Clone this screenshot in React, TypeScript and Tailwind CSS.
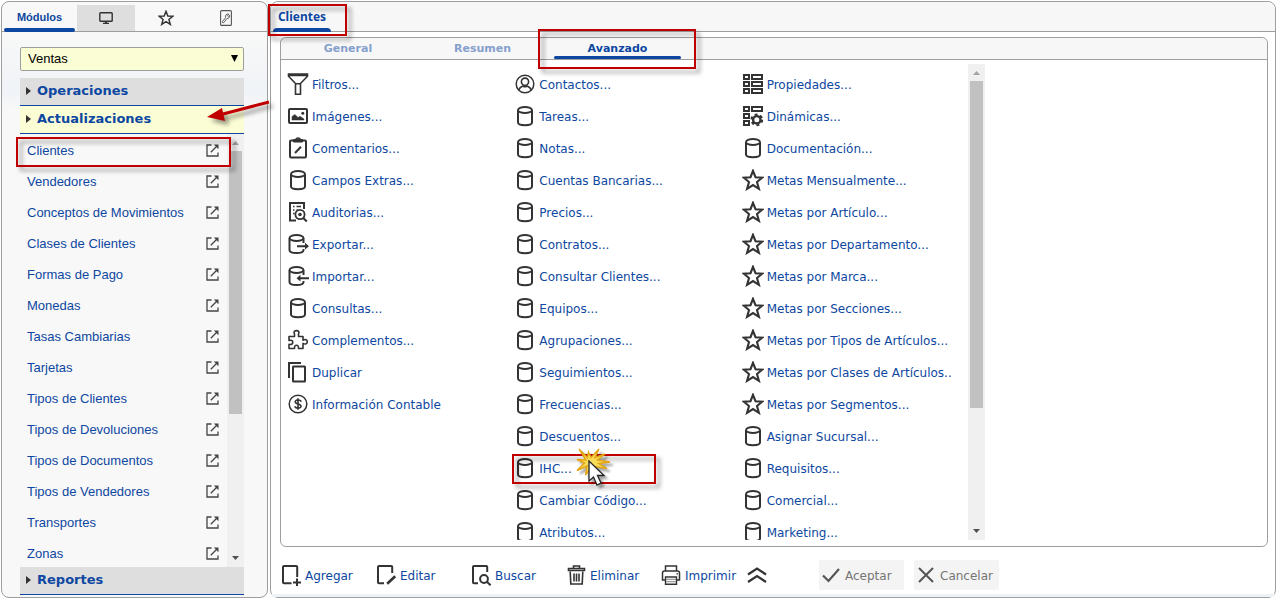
import type { ReactNode } from "react";

type IconName =
  | "funnel"
  | "image"
  | "clipboard"
  | "database"
  | "audit"
  | "export"
  | "import"
  | "puzzle"
  | "copy"
  | "dollar"
  | "contact"
  | "properties"
  | "dynamic"
  | "star";

const modules = [
  "Clientes",
  "Vendedores",
  "Conceptos de Movimientos",
  "Clases de Clientes",
  "Formas de Pago",
  "Monedas",
  "Tasas Cambiarias",
  "Tarjetas",
  "Tipos de Clientes",
  "Tipos de Devoluciones",
  "Tipos de Documentos",
  "Tipos de Vendedores",
  "Transportes",
  "Zonas",
];

const columns: { label: string; icon: IconName }[][] = [
  [
    { label: "Filtros...", icon: "funnel" },
    { label: "Imágenes...", icon: "image" },
    { label: "Comentarios...", icon: "clipboard" },
    { label: "Campos Extras...", icon: "database" },
    { label: "Auditorias...", icon: "audit" },
    { label: "Exportar...", icon: "export" },
    { label: "Importar...", icon: "import" },
    { label: "Consultas...", icon: "database" },
    { label: "Complementos...", icon: "puzzle" },
    { label: "Duplicar", icon: "copy" },
    { label: "Información Contable", icon: "dollar" },
  ],
  [
    { label: "Contactos...", icon: "contact" },
    { label: "Tareas...", icon: "database" },
    { label: "Notas...", icon: "database" },
    { label: "Cuentas Bancarias...", icon: "database" },
    { label: "Precios...", icon: "database" },
    { label: "Contratos...", icon: "database" },
    { label: "Consultar Clientes...", icon: "database" },
    { label: "Equipos...", icon: "database" },
    { label: "Agrupaciones...", icon: "database" },
    { label: "Seguimientos...", icon: "database" },
    { label: "Frecuencias...", icon: "database" },
    { label: "Descuentos...", icon: "database" },
    { label: "IHC...", icon: "database" },
    { label: "Cambiar Código...", icon: "database" },
    { label: "Atributos...", icon: "database" },
  ],
  [
    { label: "Propiedades...", icon: "properties" },
    { label: "Dinámicas...", icon: "dynamic" },
    { label: "Documentación...", icon: "database" },
    { label: "Metas Mensualmente...", icon: "star" },
    { label: "Metas por Artículo...", icon: "star" },
    { label: "Metas por Departamento...", icon: "star" },
    { label: "Metas por Marca...", icon: "star" },
    { label: "Metas por Secciones...", icon: "star" },
    { label: "Metas por Tipos de Artículos...", icon: "star" },
    { label: "Metas por Clases de Artículos...", icon: "star" },
    { label: "Metas por Segmentos...", icon: "star" },
    { label: "Asignar Sucursal...", icon: "database" },
    { label: "Requisitos...", icon: "database" },
    { label: "Comercial...", icon: "database" },
    { label: "Marketing...", icon: "database" },
  ],
];

const starPoints =
  "11,1.8 13.5,8.2 20.3,8.6 15,13 16.9,19.8 11,16 5.1,19.8 7,13 1.7,8.6 8.5,8.2";

const shapes: Record<IconName, ReactNode> = {
  funnel: (
    <path
      d="M1.5 1H20.5V3.2L13.5 10.5V21.2H8.5V10.5L1.5 3.2ZM1.5 2.4H20.5M8.5 10.8H13.5"
      strokeWidth="1.6"
    />
  ),
  image: (
    <>
      <rect x="2" y="4" width="18" height="14" rx="1" />
      <path
        d="M5 15V11.5L8 9.5L11 12.5L13 11.3L17 14V15Z"
        fill="#333"
        strokeWidth="0.5"
      />
      <circle cx="15.8" cy="8.2" r="1.5" fill="#333" stroke="none" />
    </>
  ),
  clipboard: (
    <>
      <rect x="3" y="3.5" width="16" height="17" rx="1" />
      <path d="M6.5 2.6H15.5V5H6.5Z" fill="#333" strokeWidth="1" />
      <path d="M9 2.4C9 0.6 13 0.6 13 2.4" strokeWidth="1.6" />
      <path d="M8 16L14 9.8" />
    </>
  ),
  database: (
    <>
      <ellipse cx="11" cy="5" rx="7" ry="3" strokeWidth="1.8" />
      <path d="M4 5V17.5C4 21 18 21 18 17.5V5" />
    </>
  ),
  audit: (
    <>
      <path d="M9 19.5H3V2H17V8" />
      <path d="M6 5.5H7.5M9.5 5.5H14M6 9H7.5M6 12.5H7.5M9.5 9H11" strokeWidth="1.5" />
      <circle cx="13" cy="13.5" r="4.6" strokeWidth="1.8" />
      <circle cx="13" cy="13.5" r="1.8" fill="#333" stroke="none" />
      <path d="M16.3 17L19.8 20.5" />
    </>
  ),
  export: (
    <>
      <ellipse cx="9.5" cy="5" rx="7" ry="3" strokeWidth="1.8" />
      <path d="M2.5 5V17C2.5 21 16.5 21 16.5 17V16M16.5 5V10M10 13.2H20" />
      <path d="M18 9.8L22 13.2L18 16.6Z" fill="#333" stroke="none" />
    </>
  ),
  import: (
    <>
      <ellipse cx="9.5" cy="5" rx="7" ry="3" strokeWidth="1.8" />
      <path d="M2.5 5V17C2.5 21 16.5 21 16.5 17V16M16.5 5V10M12 13.2H22" />
      <path d="M13.5 9.8L9.5 13.2L13.5 16.6Z" fill="#333" stroke="none" />
    </>
  ),
  puzzle: (
    <path
      d="M2 7.5H7.5V5C6.2 3 7.6 1.6 9.5 1.6S12.8 3 11.5 5V7.5H16V11.2C18.5 9.8 20.3 10.8 20.3 12.8S18.5 15.8 16 14.4V19.5H11.5C11.7 16.9 10.6 16.2 9.5 16.2S7.3 16.9 7.5 19.5H2V15.2C4.8 16 5.8 14.6 5.8 13.2S4.6 10.8 2 11.5Z"
      strokeWidth="1.6"
      strokeLinejoin="round"
    />
  ),
  copy: (
    <>
      <path d="M2 17V2H14" />
      <rect x="6" y="5.5" width="12" height="15" rx="0.5" />
    </>
  ),
  dollar: (
    <>
      <circle cx="11" cy="11" r="8.8" strokeWidth="1.5" />
      <path
        d="M14 8.8C14 6.4 8.2 6.2 8.2 8.8C8.2 11.4 14 10.6 14 13.2C14 15.8 8.1 15.6 8.1 13.2M11 5.2V16.8"
        strokeWidth="1.6"
      />
    </>
  ),
  contact: (
    <>
      <circle cx="11" cy="11" r="8.8" strokeWidth="1.5" />
      <circle cx="11" cy="8.7" r="3.6" strokeWidth="1.6" />
      <path
        d="M4.8 17C5.6 14.2 7.4 13.6 9 13C10.2 13.9 11.8 13.9 13 13C14.6 13.6 16.4 14.2 17.2 17"
        strokeWidth="1.6"
      />
    </>
  ),
  properties: (
    <path d="M2 2H7V6H2ZM10 2H20V6H10ZM2 9H7V13H2ZM10 9H20V13H10ZM2 16H7V20H2ZM10 16H20V20H10Z" />
  ),
  dynamic: (
    <>
      <path d="M2 2H7V6H2ZM10 2H20V6H10ZM2 9H7V13H2ZM2 16H7V20H2Z" />
      <circle cx="14.8" cy="14.8" r="3.7" strokeWidth="2.4" />
      <circle cx="14.8" cy="14.8" r="5.4" strokeWidth="2" strokeDasharray="2.9 2.755" />
    </>
  ),
  star: <polygon points={starPoints} strokeWidth="2.1" />,
};

function Drawing({ children }: { children: ReactNode }) {
  return (
    <svg
      className="size-[22px] shrink-0"
      viewBox="0 0 22 22"
      fill="none"
      stroke="#333"
      strokeWidth="2"
      aria-hidden="true"
    >
      {children}
    </svg>
  );
}

// Red frame that floats over the element it calls attention to
function Highlight({ className }: { className: string }) {
  return (
    <div
      className={`pointer-events-none absolute z-10 border-2 border-[#c00000] drop-shadow-[4px_4px_2px_rgba(0,0,0,0.4)] ${className}`}
    />
  );
}

function Scrollbar({ thumb }: { thumb: string }) {
  return (
    <div className="flex w-[17px] shrink-0 flex-col items-center bg-[#f0f0f0]">
      <svg className="size-[17px] shrink-0" viewBox="0 0 17 17" aria-hidden="true">
        <path d="M5 11L8.5 7L12 11Z" fill="#a3a3a3" />
      </svg>
      <div className="flex w-[13px] grow flex-col">
        <div className={`bg-[#c1c1c1] ${thumb}`} />
      </div>
      <svg className="size-[17px] shrink-0" viewBox="0 0 17 17" aria-hidden="true">
        <path d="M5 6L8.5 10L12 6Z" fill="#505050" />
      </svg>
    </div>
  );
}

function SectionHeader({ title, active }: { title: string; active?: boolean }) {
  return (
    <button
      type="button"
      className={`flex h-7 w-full shrink-0 items-center gap-1.5 border-b border-[#0d47a1] pb-0.5 pl-1.5 text-left font-['DejaVu_Sans',sans-serif] text-[13px] font-bold text-[#0d47a1] ${
        active ? "bg-[#fbfdd5]" : "bg-[#dedede]"
      }`}
    >
      <svg className="h-2 w-[5px]" viewBox="0 0 5 8" aria-hidden="true">
        <path d="M0 0L5 4L0 8Z" fill="#333" />
      </svg>
      {title}
    </button>
  );
}

function ExternalIcon() {
  return (
    <svg className="size-[13px]" viewBox="0 0 13 13" fill="none" stroke="#444" strokeWidth="1.3" aria-hidden="true">
      <path d="M5.5 1H1V12H12V8.5M4.8 8.2L10.5 2.5" />
      <path d="M7.8 0.5H12.5V5.2Z" fill="#444" stroke="none" />
    </svg>
  );
}

function Sidebar() {
  return (
    <aside className="flex w-[267px] shrink-0 flex-col rounded-lg border border-[#9e9e9e] bg-linear-to-b from-[#f8f8f8] from-5% via-[#f0f3f7] via-15% to-[#f8f8f8] to-18%">
      <div className="flex h-[30px] shrink-0 items-end border-b border-[#9e9e9e]">
        <button
          type="button"
          className="relative flex h-[30px] w-[75px] justify-center pt-2 text-[11px] leading-4 font-bold text-[#0d47a1]"
        >
          Módulos
          <span className="absolute inset-x-0.5 -bottom-px h-1 rounded-full bg-[#0d47a1]" />
        </button>
        <button type="button" aria-label="Escritorio" className="flex h-[26px] w-[58px] items-center justify-center bg-[#dedede]">
          <svg className="h-3 w-[14px]" viewBox="0 0 14 12" fill="none" stroke="#333" strokeWidth="1.4" aria-hidden="true">
            <rect x="0.8" y="0.8" width="12.4" height="8.4" rx="0.8" />
            <path d="M4 11.4H10M6 10.4H8" strokeWidth="1.2" />
          </svg>
        </button>
        <button type="button" aria-label="Favoritos" className="flex h-[26px] w-[61px] items-center justify-center">
          <svg className="size-4" viewBox="0 0 22 22" fill="none" stroke="#333" strokeWidth="2" aria-hidden="true">
            <polygon points={starPoints} />
          </svg>
        </button>
        <button type="button" aria-label="Herramientas" className="flex h-[26px] w-[59px] items-center justify-center">
          <svg className="h-4 w-3" viewBox="0 0 12 16" fill="none" stroke="#555" strokeWidth="1.1" aria-hidden="true">
            <rect x="0.6" y="0.6" width="10.8" height="14.8" rx="1" />
            <path d="M2.8 12.8L2.4 11.6L5.6 7.7C5 5.2 6.4 3.5 8.8 4L7.4 5.6L8.2 6.5L9.7 5.2C10 7.8 8.4 8.8 6.8 8.6L3.8 12.6Z" strokeWidth="0.9" />
          </svg>
        </button>
      </div>

      <div className="mt-[15px] mr-[23px] ml-[18px] flex min-h-0 grow flex-col pb-0.5">
        <div className="relative mb-[7px]">
          <select
            aria-label="Módulo"
            className="block h-6 w-full appearance-none rounded-xs border border-[#9e9e9e] bg-[#fbfdd5] px-[7px] text-[13px] text-black"
          >
            <option>Ventas</option>
          </select>
          <svg className="pointer-events-none absolute top-2 right-1.5 h-[7px] w-[7px]" viewBox="0 0 7 7" aria-hidden="true">
            <path d="M0 0H7L3.5 7Z" fill="#000" />
          </svg>
        </div>
        <SectionHeader title="Operaciones" />
        <div className="relative">
          <SectionHeader title="Actualizaciones" active />
          <svg
            className="pointer-events-none absolute -top-2.5 left-[184px] z-10 h-9 w-[72px] drop-shadow-[4px_4px_2px_rgba(0,0,0,0.4)]"
            viewBox="0 0 72 36"
            aria-hidden="true"
          >
            <path d="M65 6L19 18" stroke="#c00000" strokeWidth="3" />
            <path d="M3 21L18 12L21 25Z" fill="#c00000" />
          </svg>
        </div>
        <div className="relative flex min-h-0 grow">
          <Highlight className="top-[3px] -left-1 h-[30px] w-[215px]" />
          <ul className="min-w-0 grow overflow-hidden pt-px">
            {modules.map((name) => (
              <li key={name} className="flex h-[31px] items-center justify-between pr-2 pl-[7px]">
                <a href="#" className="text-[13px] text-[#0d47a1]">
                  {name}
                </a>
                <ExternalIcon />
              </li>
            ))}
          </ul>
          <Scrollbar thumb="h-[66%]" />
        </div>
        <SectionHeader title="Reportes" />
      </div>
    </aside>
  );
}

function ClickCursor() {
  return (
    <svg
      className="pointer-events-none absolute -top-1 left-[62px] z-20 h-10 w-9 drop-shadow-[3px_3px_1px_rgba(0,0,0,0.35)]"
      viewBox="0 0 36 40"
      aria-hidden="true"
    >
      <path
        d="M3 1L11.5 9.5L12.5 4L15 9.5L23 1L19 9.5L29 6L21.5 12L34 14L22.5 15.5L31 20.5L19.5 18.5L20 25L15.5 19L9.5 27L11 18L1 22.5L8.5 15L1 11.5L10 12Z"
        fill="#f7dc5a"
        stroke="#e3a512"
        strokeWidth="1.4"
      />
      <path
        d="M13 13V33L17.5 29L21 37L25 35L21.5 27.5H28Z"
        fill="#fff"
        stroke="#222"
        strokeWidth="1.3"
      />
    </svg>
  );
}

function ToolButton({ label, className, icon }: { label: string; className?: string; icon: ReactNode }) {
  return (
    <button
      type="button"
      className={`flex h-[30px] items-center gap-0.5 rounded-xs whitespace-nowrap ${className ?? ""}`}
    >
      <Drawing>{icon}</Drawing>
      <span className="pt-0.5">{label}</span>
    </button>
  );
}

function Toolbar() {
  return (
    <div className="flex h-[47px] shrink-0 items-start pt-[13px] pl-[10px] text-[#0d47a1]">
      <ToolButton
        className="w-[95px]"
        label="Agregar"
        icon={
          <>
            <path d="M10.5 19.2H3C2.3 19.2 2 18.9 2 18.2V3C2 2.3 2.3 2 3 2H15.2C15.9 2 16.2 2.3 16.2 3V13" />
            <path d="M16 14.5V22M12 18.4H20" />
          </>
        }
      />
      <ToolButton
        className="w-[95px]"
        label="Editar"
        icon={
          <>
            <path d="M8 19.2H3C2.3 19.2 2 18.9 2 18.2V3C2 2.3 2.3 2 3 2H15.2C15.9 2 16.2 2.3 16.2 3V9" />
            <path d="M11.2 19.8L19.2 12.2" strokeWidth="2.6" />
          </>
        }
      />
      <ToolButton
        className="w-[95px]"
        label="Buscar"
        icon={
          <>
            <path d="M7 19.2H3C2.3 19.2 2 18.9 2 18.2V3C2 2.3 2.3 2 3 2H15.2C15.9 2 16.2 2.3 16.2 3V8" />
            <circle cx="13" cy="15" r="3.9" />
            <path d="M15.8 17.8L19.6 21.2" />
          </>
        }
      />
      <ToolButton
        className="w-[95px]"
        label="Eliminar"
        icon={
          <>
            <path d="M2.5 4.5H18.5V6.5H2.5ZM7.5 4V2H13.5V4" strokeWidth="1.6" />
            <path d="M4.2 7.5L4.8 20H16.2L16.8 7.5M8 9.5V17.5M10.5 9.5V17.5M13 9.5V17.5" strokeWidth="1.6" />
          </>
        }
      />
      <ToolButton
        className="w-[85px]"
        label="Imprimir"
        icon={
          <>
            <path d="M4.5 7V2H15.5V7M4.5 16H1.5V9C1.5 7.5 2.5 7 3.5 7H16.5C17.5 7 18.5 7.5 18.5 9V16H15.5" strokeWidth="1.5" />
            <path d="M4.5 13H15.5V20.2H4.5Z" strokeWidth="1.4" />
            <path d="M5 15.3H15M5 17.6H15" stroke="#999" strokeWidth="1.2" />
            <path d="M15.5 9.8H17" strokeWidth="1.3" />
          </>
        }
      />
      <button type="button" aria-label="Más acciones" className="flex h-[30px] items-center">
        <Drawing>
          <path d="M2 10.5L11 4.5L20 10.5M2 18L11 12L20 18" strokeWidth="2.2" />
        </Drawing>
      </button>
      <div className="ml-[51px] flex gap-2.5 text-[#757575]">
        <ToolButton
          className="w-[85px] bg-[#f4f4f4] pl-[2px]"
          label="Aceptar"
          icon={<path d="M2 11.5L7.5 17L18 5" stroke="#555" strokeWidth="2.2" />}
        />
        <ToolButton
          className="w-[85px] bg-[#f4f4f4] pl-[2px]"
          label="Cancelar"
          icon={<path d="M3 4L17 18M17 4L3 18" stroke="#555" strokeWidth="2" />}
        />
      </div>
    </div>
  );
}

function ClientesPanel() {
  return (
    <main className="flex min-w-0 grow flex-col rounded-lg border border-[#9e9e9e] bg-white font-['DejaVu_Sans',sans-serif] text-xs">
      <div className="relative flex h-[30px] shrink-0 rounded-t-lg border-b border-[#9e9e9e] bg-[#f7f7f7]">
        <button
          type="button"
          className="relative ml-0.5 w-[58px] font-['Noto_Sans',sans-serif] font-bold text-[#0d47a1]"
        >
          Clientes
          <span className="absolute inset-x-0 -bottom-px h-1 rounded-t-sm bg-[#0d47a1]" />
        </button>
        <Highlight className="top-0.5 -left-[3px] h-8 w-[79px]" />
      </div>

      <section className="mt-[5px] mr-[7px] ml-[9px] flex min-h-0 grow flex-col rounded-md border border-[#9e9e9e]">
        <div className="flex h-[22px] shrink-0 rounded-t-md border-b border-[#9e9e9e] bg-[#f7f7f7] text-[11px] font-bold">
          <button type="button" className="w-[134px] pt-px text-[#869fcc]">
            General
          </button>
          <button type="button" className="w-[135px] pt-px text-[#869fcc]">
            Resumen
          </button>
          <button type="button" className="relative w-[135px] pt-px text-[#0d47a1]">
            Avanzado
            <span className="absolute inset-x-1 bottom-0 h-[3px] rounded-full bg-[#0d47a1]" />
            <Highlight className="-top-[9px] -left-3 h-10 w-[158px]" />
          </button>
        </div>

        <div className="flex min-h-0 grow gap-[17px] pt-1 pb-1.5 pl-1.5">
          <div className="grid w-[664px] grid-cols-3 gap-x-[18px] overflow-hidden pt-1">
            {columns.map((items, index) => (
              <ul key={index} className="min-w-0">
                {items.map(({ label, icon }) => (
                  <li key={label} className="relative h-8">
                    <button
                      type="button"
                      className="flex h-8 w-full items-center gap-[3px] overflow-hidden whitespace-nowrap text-[#0d47a1]"
                    >
                      <Drawing>{shapes[icon]}</Drawing>
                      <span className="pt-0.5">{label}</span>
                    </button>
                    {label === "IHC..." && (
                      <>
                        <Highlight className="top-0.5 -left-0.5 h-[30px] w-36" />
                        <ClickCursor />
                      </>
                    )}
                  </li>
                ))}
              </ul>
            ))}
          </div>
          <Scrollbar thumb="h-[74%]" />
        </div>
      </section>

      <Toolbar />
      <div className="h-[3px] shrink-0 rounded-b-lg bg-[#eef2f6]" />
    </main>
  );
}

export default function App() {
  return (
    <div className="flex h-screen gap-[2px] bg-white pt-px pr-[3px] pb-[2px] pl-px font-['Liberation_Sans',Arial,sans-serif]">
      <Sidebar />
      <ClientesPanel />
    </div>
  );
}
